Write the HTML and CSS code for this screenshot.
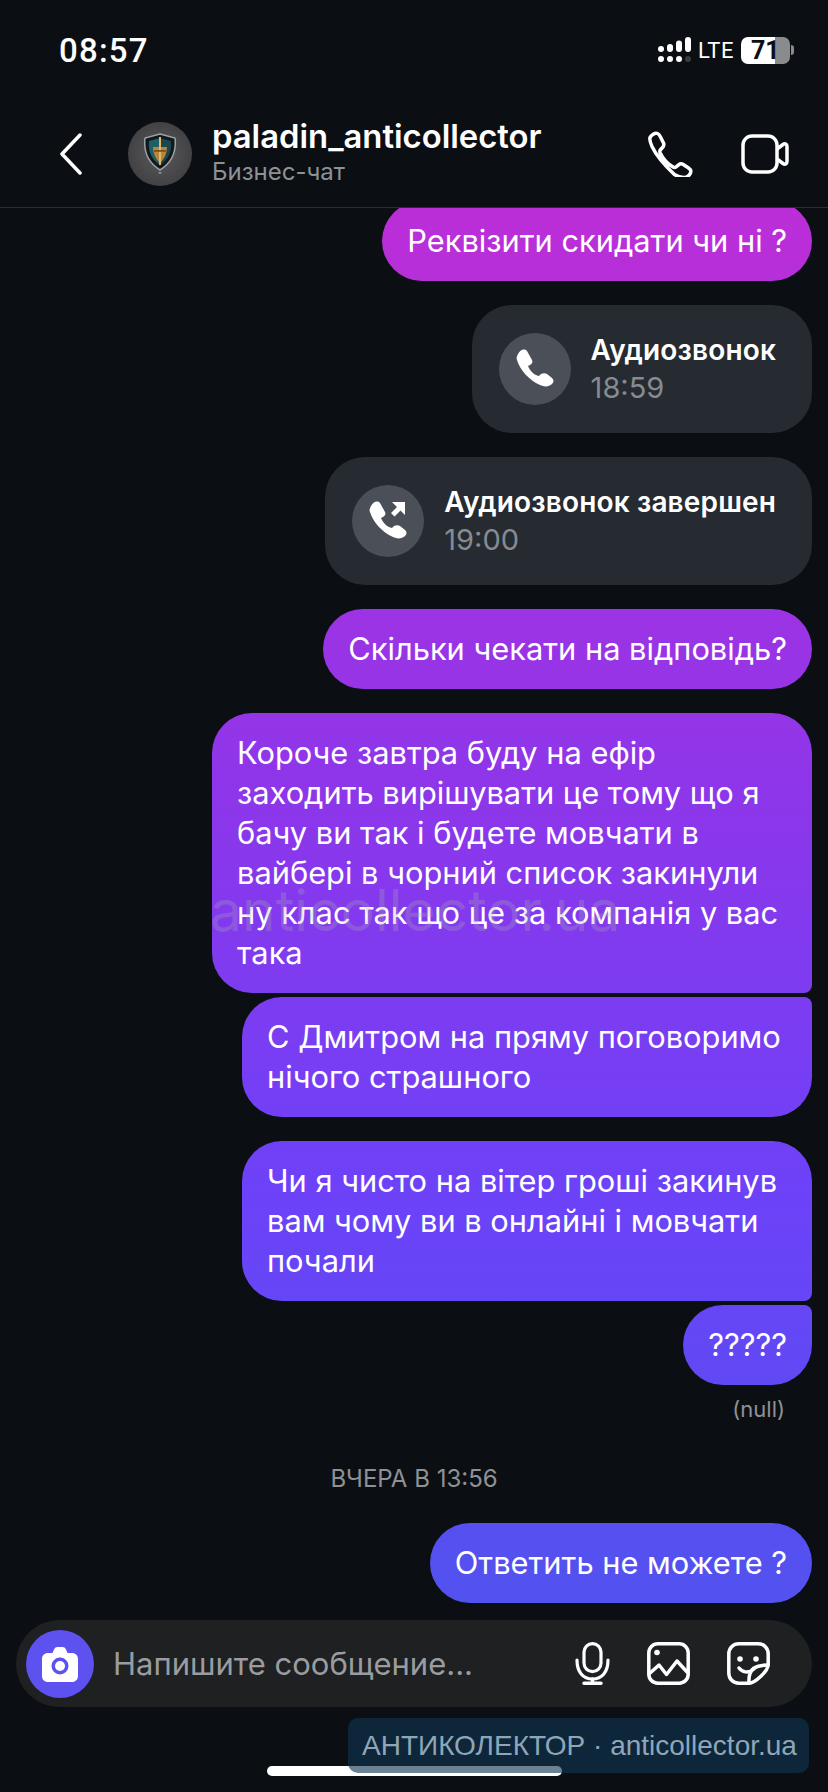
FILE: index.html
```html
<!DOCTYPE html>
<html lang="uk">
<head>
    <meta charset="UTF-8">
    <meta name="viewport" content="width=device-width, initial-scale=1.0">
    <title>paladin_anticollector</title>
    <link rel="stylesheet" href="styles.css">
</head>
<body>
    <div class="phone">
        <div class="status-bar">
            <span class="clock">08:57</span>
            <div class="status-right">
                <svg class="signal" width="33" height="26" viewBox="0 0 33 26" fill="#fff">
                    <circle cx="3" cy="12" r="3"/>
                    <rect x="9" y="7" width="6" height="8" rx="3"/>
                    <rect x="18" y="3.500" width="6" height="11.500" rx="3"/>
                    <rect x="27" y="0" width="6" height="15" rx="3"/>
                    <circle cx="3" cy="22" r="3"/>
                    <circle cx="12" cy="22" r="3"/>
                    <circle cx="21" cy="22" r="3"/>
                    <circle cx="30" cy="22" r="3" fill="#3a3d40"/>
                </svg>
                <span class="lte">LTE</span>
                <div class="battery">
                    <div class="battery-body"><span>71</span></div>
                    <div class="battery-tip"></div>
                </div>
            </div>
        </div>

        <header class="chat-header">
            <svg class="back" width="24" height="42" viewBox="0 0 24 42" fill="none" stroke="#fff" stroke-width="3.500" stroke-linecap="round" stroke-linejoin="round">
                <path d="M21 2 3 21l18 19"/>
            </svg>
            <div class="avatar">
                <svg width="34" height="42" viewBox="0 0 34 42">
                    <path d="M17 1 32 5c1.500 13-2 24-15 32C4 29 .500 18 2 5Z" fill="#14181b" stroke="#9aa3a8" stroke-width="1.500"/>
                    <path d="M6 8 17 5v27C8 26 5 18 6 8Z" fill="#1c5f66"/>
                    <path d="M28 8 17 5v27c9-6 12-14 11-24Z" fill="#1a4750"/>
                    <path d="M10 14h14c0 7-3 12-7 16-4-4-7-9-7-16Z" fill="#b9853a"/>
                    <rect x="16" y="4" width="2" height="28" fill="#e2b866"/>
                    <rect x="11" y="17" width="12" height="1.800" fill="#7a5420"/>
                    <path d="M15 39h4l-2 2.500Z" fill="#8d9295"/>
                </svg>
            </div>
            <div class="chat-title">
                <div class="chat-name">paladin_anticollector</div>
                <div class="chat-sub">Бизнес-чат</div>
            </div>
            <div class="header-actions">
                <svg width="46" height="46" viewBox="0 0 46 46" fill="none" stroke="#fff" stroke-width="3.500" stroke-linejoin="round">
                    <path d="M3 6.500C4 4 8 1.500 10.500 2.500c1.500.6 2 1.500 3 3.500l3 6c.8 1.800.3 3-1 4.500l-2 2.200c-.8 1-.9 1.800-.4 3 2.500 5.500 7.400 11 13 14.300 1.200.7 2 .6 3-.2l2.500-2c1.500-1.200 2.700-1.500 4.300-.5l5.300 3.500c1.700 1.200 2.700 2 2.700 3.500 0 2.500-3 5.800-6 6.200-3 .3-6.500-.7-10.500-3C18 34.500 9.500 25 5 15.500 3.500 12 2.200 9 3 6.500Z"/>
                </svg>
                <svg width="48" height="40" viewBox="0 0 48 40" fill="none" stroke="#fff" stroke-width="3.500" stroke-linejoin="round">
                    <rect x="2" y="2" width="34" height="36" rx="9"/>
                    <path d="M36 15 42 10.500c2-1.500 4-.5 4 2v15c0 2.500-2 3.500-4 2L36 25"/>
                </svg>
            </div>
        </header>

        <main class="messages">
            <div class="bubble">Реквізити скидати чи ні ?</div>

            <div class="call-card">
                <div class="call-icon">
                    <svg width="42" height="42" viewBox="0 0 42 42" fill="#fff">
                        <path d="M4 6C6 2 10 0 13 3l5 9c1 2 0 4-2 5l-2 1c2 5 6 9 11 10l2-2c2-1 4-1 6 0l5 4c2 2 2 4 0 6-3 3-8 3-12 1C15 32 6 22 3 12c-1-2 0-4 1-6Z"/>
                    </svg>
                </div>
                <div class="call-info">
                    <div class="call-title">Аудиозвонок</div>
                    <div class="call-time">18:59</div>
                </div>
            </div>

            <div class="call-card">
                <div class="call-icon">
                    <svg width="42" height="42" viewBox="0 0 42 42" fill="#fff">
                        <path d="M4 6C6 2 10 0 13 3l5 9c1 2 0 4-2 5l-2 1c2 5 6 9 11 10l2-2c2-1 4-1 6 0l5 4c2 2 2 4 0 6-3 3-8 3-12 1C15 32 6 22 3 12c-1-2 0-4 1-6Z"/>
                        <path d="M25 2h13v13l-4.500-4.500-6 6-3.500-3.500 6-6Z"/>
                    </svg>
                </div>
                <div class="call-info">
                    <div class="call-title">Аудиозвонок завершен</div>
                    <div class="call-time">19:00</div>
                </div>
            </div>

            <div class="bubble">Скільки чекати на відповідь?</div>

            <div class="bubble group-first">Короче завтра буду на ефір заходить вирішувати це тому що я бачу ви так і будете мовчати в вайбері в чорний список закинули ну клас так що це за компанія у вас така</div>
            <div class="bubble group-last narrow">С Дмитром на пряму поговоримо нічого страшного</div>

            <div class="bubble group-first narrow">Чи я чисто на вітер гроші закинув вам чому ви в онлайні і мовчати почали</div>
            <div class="bubble group-last">?????</div>
            <div class="msg-status">(null)</div>

            <div class="day-label">ВЧЕРА В 13:56</div>

            <div class="bubble">Ответить не можете ?</div>
        </main>

        <div class="composer">
            <div class="camera-btn">
                <svg width="36" height="36" viewBox="0 0 36 36">
                    <path d="M6 7h4.500l1.500-3.500C12.800 1.800 14 1 15.500 1h5c1.500 0 2.700.8 3.500 2.500L25.500 7H30c3.500 0 6 2.500 6 6v17c0 3.500-2.500 6-6 6H6c-3.500 0-6-2.500-6-6V13c0-3.500 2.500-6 6-6Z" fill="#fff"/>
                    <circle cx="18" cy="20" r="8.500" fill="#5d51f0"/>
                    <circle cx="18" cy="20" r="5" fill="#fff"/>
                </svg>
            </div>
            <div class="composer-input">Напишите сообщение...</div>
            <div class="composer-icons">
                <svg width="35" height="43" viewBox="0 0 35 43" fill="none" stroke="#fff" stroke-width="3.200" stroke-linecap="round">
                    <rect x="9" y="1.600" width="17" height="28" rx="8.500"/>
                    <path d="M2 18c0 12 6 19 15.500 19S33 30 33 18"/>
                    <path d="M17.500 37v4M9 41.200h17" stroke-width="3.500"/>
                </svg>
                <svg width="43" height="43" viewBox="0 0 43 43" fill="none" stroke="#fff" stroke-width="3.500" stroke-linejoin="round">
                    <rect x="1.800" y="1.800" width="39.400" height="39.400" rx="9"/>
                    <circle cx="10" cy="10.500" r="2.800" fill="#fff" stroke="none"/>
                    <path d="M2 32 12 23l7.500 9.500L30 19l11 12"/>
                </svg>
                <svg width="43" height="43" viewBox="0 0 43 43" fill="none" stroke="#fff" stroke-width="3.500" stroke-linejoin="round" stroke-linecap="round">
                    <path d="M22 41.200H12C6 41.200 1.800 37 1.800 31V12C1.800 6 6 1.800 12 1.800h19c6 0 10.200 4.200 10.200 10.200v10.500C41.200 29 28 41.200 22 41.200Z"/>
                    <path d="M22 41c-.5-7 1-12 5-15 4-2.500 9-3 14-3"/>
                    <path d="M12 26c3 4 9 6 15 1"/>
                    <circle cx="13" cy="17" r="2.800" fill="#fff" stroke="none"/>
                    <circle cx="29" cy="17" r="2.800" fill="#fff" stroke="none"/>
                </svg>
            </div>
        </div>

        <div class="ghost-mark">anticollector.ua</div>
        <div class="home-bar"></div>
        <div class="site-mark">АНТИКОЛЕКТОР · anticollector.ua</div>
    </div>
</body>
</html>
```

FILE: styles.css
```css
* {
    box-sizing: border-box;
}

body {
    margin: 0;
    background: #0b0f13;
    font-family: "Inter", "Noto Sans", sans-serif;
    color: #fff;
}

.phone {
    position: relative;
    width: 828px;
    height: 1792px;
    display: flex;
    flex-direction: column;
    overflow: hidden;
}

/* Status bar */
.status-bar {
    height: 100px;
    flex: none;
    display: flex;
    justify-content: space-between;
    align-items: center;
    padding: 0 34px 0 59px;
    background: #0b0f13;
}

.clock {
    font-family: "Roboto", sans-serif;
    font-size: 33px;
    font-weight: 500;
    letter-spacing: 1.2px;
}

.status-right {
    display: flex;
    align-items: center;
    gap: 7px;
}

.lte {
    font-family: "Roboto", sans-serif;
    font-size: 22px;
    letter-spacing: 0.5px;
}

.battery {
    display: flex;
    align-items: center;
    gap: 1px;
}

.battery-body {
    width: 49px;
    height: 27px;
    border-radius: 7px;
    background: linear-gradient(to right, #fff 70%, #8a8b8d 70%);
    color: #0b0f13;
    font-family: "Roboto", sans-serif;
    font-size: 25px;
    font-weight: 700;
    line-height: 27px;
    padding-left: 10px;
}

.battery-tip {
    width: 3px;
    height: 10px;
    border-radius: 0 3px 3px 0;
    background: #8a8b8d;
}

/* Header */
.chat-header {
    position: relative;
    z-index: 1;
    height: 108px;
    flex: none;
    display: flex;
    align-items: center;
    padding: 0 39px 0 59px;
    background: #0b0f13;
    border-bottom: 1px solid #2a2d31;
}

.back {
    flex: none;
}

.avatar {
    width: 64px;
    height: 64px;
    margin-left: 45px;
    flex: none;
    border-radius: 50%;
    background: radial-gradient(circle, #5a5a5c, #38383a);
    display: flex;
    align-items: center;
    justify-content: center;
}

.chat-title {
    margin-left: 20px;
    margin-top: -3px;
    flex: 1;
}

.chat-name {
    font-size: 32.8px;
    font-weight: 600;
    line-height: 38px;
}

.chat-sub {
    font-size: 24px;
    line-height: 32px;
    color: #8e9195;
    margin-top: 1px;
}

.header-actions {
    display: flex;
    align-items: center;
    gap: 48px;
}

/* Messages */
.messages {
    flex: 1;
    min-height: 0;
    display: flex;
    flex-direction: column;
    align-items: flex-end;
    justify-content: flex-end;
    gap: 24px;
    padding: 0 16px 17px 16px;
    overflow: hidden;
}

.bubble {
    max-width: 600px;
    padding: 20px 25px;
    border-radius: 40px;
    font-size: 30.8px;
    line-height: 40px;
    flex: none;
    background: linear-gradient(to bottom, #bc2ed7 200px, #8d36ea 800px, #6c42f8 1200px, #5252ef 1600px) fixed;
}

.bubble.narrow {
    max-width: 570px;
}

.bubble.group-first {
    border-bottom-right-radius: 8px;
    margin-bottom: -20px;
}

.bubble.group-last {
    border-top-right-radius: 8px;
}

.call-card {
    height: 128px;
    flex: none;
    display: flex;
    align-items: center;
    gap: 20px;
    padding: 0 36px 0 27px;
    border-radius: 40px;
    background: #262a31;
}

.call-icon {
    width: 72px;
    height: 72px;
    border-radius: 50%;
    background: #4b5058;
    display: flex;
    align-items: center;
    justify-content: center;
}

.call-title {
    font-size: 28px;
    font-weight: 600;
    line-height: 38px;
    letter-spacing: 0.15px;
}

.call-time {
    font-size: 29px;
    line-height: 38px;
    color: #868a91;
}

.msg-status {
    margin: -12px 27px 0 0;
    font-size: 22px;
    line-height: 24px;
    color: #8e9195;
}

.day-label {
    align-self: center;
    margin: 20px 0 6px;
    font-size: 24px;
    line-height: 28px;
    color: #8e9195;
}

/* Composer */
.composer {
    height: 87px;
    flex: none;
    margin: 0 16px 85px;
    padding: 0 42px 0 10px;
    display: flex;
    align-items: center;
    border-radius: 44px;
    background: #1e2022;
}

.camera-btn {
    width: 68px;
    height: 68px;
    flex: none;
    border-radius: 50%;
    background: #5d51f0;
    display: flex;
    align-items: center;
    justify-content: center;
}

.composer-input {
    flex: 1;
    margin-left: 19px;
    font-size: 31px;
    color: #9a9ca0;
}

.composer-icons {
    display: flex;
    align-items: center;
    gap: 37px;
}

/* Overlays */
.ghost-mark {
    position: absolute;
    left: 210px;
    top: 877px;
    font-size: 57px;
    line-height: 68px;
    color: rgba(170, 170, 180, 0.28);
    pointer-events: none;
}

.home-bar {
    position: absolute;
    left: 267px;
    top: 1766px;
    width: 295px;
    height: 10px;
    border-radius: 5px;
    background: #fff;
}

.site-mark {
    position: absolute;
    left: 348px;
    top: 1718px;
    width: 461px;
    height: 55px;
    padding-left: 14px;
    border-radius: 10px;
    font-family: "Liberation Sans", sans-serif;
    font-size: 28px;
    line-height: 55px;
    color: #8fa6b8;
    background: rgba(16, 54, 82, 0.62);
}
```
